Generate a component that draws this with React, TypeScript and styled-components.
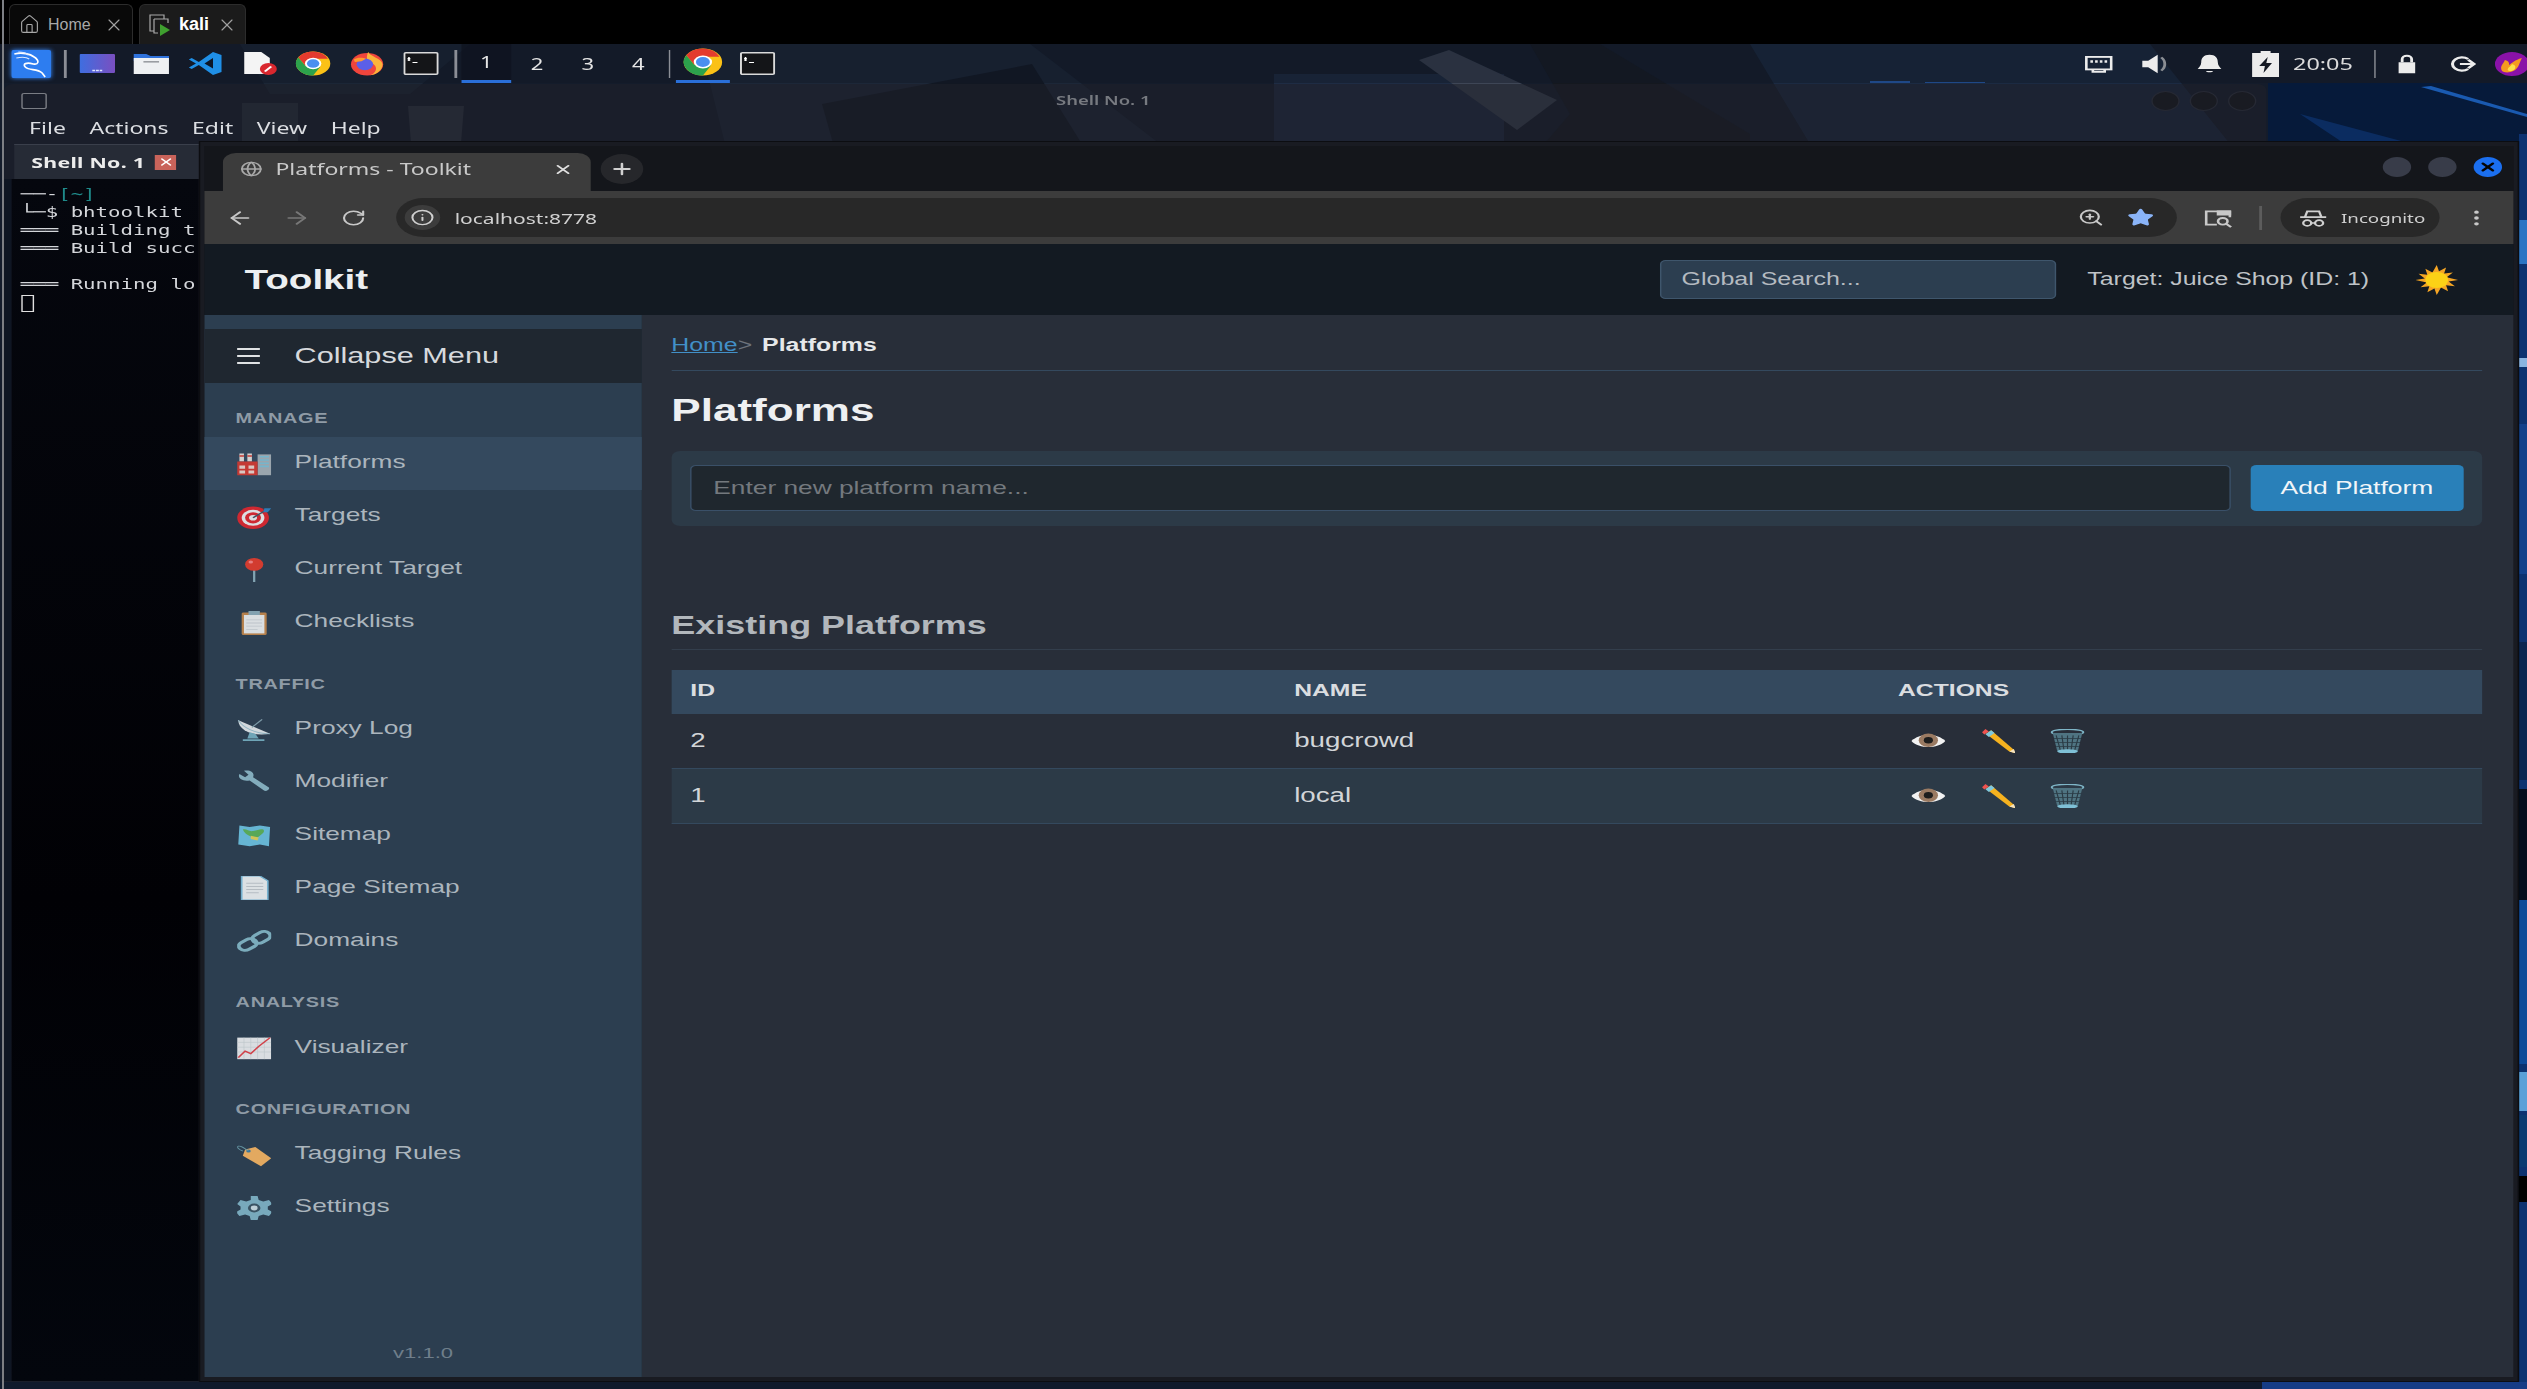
import React from 'react';
import styled, { createGlobalStyle } from 'styled-components';
import {
  ArrowLeft,
  ArrowRight,
  EllipsisVertical,
  Globe,
  Home as HomeIcon,
  Info,
  Plus,
  RotateCw,
  Star,
  X,
  ZoomIn,
} from 'lucide-react';

const GlobalStyle = createGlobalStyle`
  html, body {
    margin: 0;
    width: 2527px;
    height: 1389px;
    overflow: hidden;
    background: #000;
  }
  * { box-sizing: border-box; }
`;

/* ---------- viewer tabs, at the top of the capture ---------- */

const Page = styled.div`
  position: relative;
  width: 2527px;
  height: 1389px;
  overflow: hidden;
`;

const EdgeLine = styled.div`
  position: absolute;
  left: 2px;
  top: 0;
  bottom: 0;
  width: 2px;
  background: #7d7f84;
  z-index: 5;
`;

const ViewerBar = styled.div`
  display: flex;
  align-items: flex-end;
  gap: 6px;
  height: 44px;
  padding-left: 9px;
  background: #000;
  font-family: 'Liberation Sans', sans-serif;
`;

const ViewerTab = styled.div<{ $active?: boolean }>`
  display: flex;
  align-items: center;
  height: 40px;
  width: ${(p) => (p.$active ? 107 : 124)}px;
  padding-left: 9px;
  border: 1px solid #2c2c2c;
  border-bottom: none;
  border-radius: 6px 6px 0 0;
  background: ${(p) => (p.$active ? '#1b1b1b' : '#090909')};
  color: ${(p) => (p.$active ? '#fff' : '#a8a8a8')};
  font-size: ${(p) => (p.$active ? 18 : 16)}px;
  font-weight: ${(p) => (p.$active ? 700 : 400)};
`;

const ViewerLabel = styled.span`
  margin-left: 8px;
  flex: 1;
`;

const ViewerClose = styled(X)`
  margin-right: 8px;
  color: #a0a0a0;
`;

/* ---------- everything under the viewer tabs is 1.42x wider than tall ---------- */

const Stage = styled.div`
  position: relative;
  width: 1779.58px;
  height: 1345px;
  transform: scale(1.42, 1);
  transform-origin: 0 0;
  overflow: hidden;
`;

const WallpaperArt = styled.svg`
  position: absolute;
  inset: 0;
  width: 100%;
  height: 100%;
`;

const Panel = styled.div`
  position: relative;
  display: flex;
  align-items: center;
  height: 39px;
  padding-left: 8px;
  background: rgba(18, 24, 38, 0.45);
`;

const Divider = styled.span<{ $l: number; $r: number }>`
  width: 1.6px;
  height: 28px;
  margin: 0 ${(p) => p.$r}px 0 ${(p) => p.$l}px;
  background: #8b8e96;
`;

const Launcher = styled.div<{ $underline?: boolean; $width?: number }>`
  display: flex;
  align-items: center;
  justify-content: center;
  width: ${(p) => p.$width ?? 38}px;
  height: 39px;
  border-bottom: ${(p) => (p.$underline ? '3px solid #2a6fd8' : 'none')};
`;

const Workspace = styled.div<{ $active?: boolean }>`
  display: flex;
  align-items: center;
  justify-content: center;
  width: 35.7px;
  height: 39px;
  color: #e6e6e6;
  font-family: 'Noto Sans', sans-serif;
  font-size: 15.5px;
  background: ${(p) => (p.$active ? 'rgba(14,18,30,.7)' : 'transparent')};
  border-bottom: ${(p) => (p.$active ? '3px solid #2a6fd8' : 'none')};
`;

const Tray = styled.div`
  display: flex;
  align-items: center;
  margin-left: auto;
  margin-right: -1.4px;
`;

const Tile = styled.div`
  display: flex;
  align-items: center;
  justify-content: center;
  width: 39px;
  height: 39px;
`;

const Clock = styled.span`
  width: 57px;
  color: #dcdcdc;
  font-family: 'Noto Sans', sans-serif;
  font-size: 16.5px;
`;

const Avatar = styled.span`
  display: flex;
  margin-left: 3.4px;
`;

const Desktop = styled.div`
  position: relative;
  height: 1306px;
`;

/* ---------- terminal window behind the browser ---------- */

const TerminalWindow = styled.div`
  position: absolute;
  left: 3px;
  top: 1px;
  width: 1593px;
  height: 1298px;
  border-radius: 6px 6px 0 0;
  background: rgba(30, 32, 42, 0.6);
`;

const TermTitle = styled.div`
  display: flex;
  align-items: center;
  justify-content: center;
  position: relative;
  height: 32px;
  padding-right: 45px;
  color: #777a80;
  font-family: 'Noto Sans', sans-serif;
  font-size: 13px;
  font-weight: 600;
`;

const TermDots = styled.div`
  position: absolute;
  right: 7px;
  top: 7px;
  display: flex;
  gap: 7px;
`;

const TermDot = styled.span`
  width: 20px;
  height: 20px;
  border-radius: 50%;
  background: #191b22;
  border: 1px solid #262934;
`;

const TermIcon = styled.span`
  position: absolute;
  left: 12px;
  top: 9px;
  width: 18px;
  height: 16px;
  border: 1.5px solid #7a7d84;
  border-radius: 2px;
`;

const TermMenu = styled.div`
  display: flex;
  gap: 16.6px;
  padding-left: 17.5px;
  height: 24px;
  align-items: center;
  color: #dcdee2;
  font-family: 'Noto Sans', sans-serif;
  font-size: 16.2px;
`;

const ShellTab = styled.div`
  display: flex;
  align-items: center;
  margin: 4px 0 0 7px;
  width: 200px;
  height: 35px;
  padding-left: 12px;
  background: #262b36;
  border-top: 1px solid #3a3f4b;
  color: #ececec;
  font-family: 'Noto Sans', sans-serif;
  font-size: 15px;
  font-weight: 700;
  letter-spacing: 0.2px;
`;

const ShellClose = styled.span`
  display: flex;
  align-items: center;
  justify-content: center;
  width: 15px;
  height: 15px;
  margin-left: 7px;
  background: #c9635a;
  color: #fff;
`;

const TermBody = styled.pre`
  margin: 0;
  padding: 6px 0 0 6.6px;
  height: 1202px;
  border-left: 5.6px solid #0f1623;
  background: linear-gradient(#05070e, #010105 60%, #03060d);
  color: #d4d6da;
  font-family: 'DejaVu Sans Mono', monospace;
  font-size: 14.6px;
  line-height: 18px;
`;

const TermTeal = styled.span`
  color: #1f8a8a;
`;

const TermCursor = styled.span`
  display: block;
  width: 9px;
  height: 17px;
  margin-top: 2px;
  border: 1.5px solid #e0e0e0;
`;

/* ---------- browser window ---------- */

const BrowserWindow = styled.div`
  position: absolute;
  left: 140.1px;
  top: 58px;
  width: 1633.9px;
  height: 1241px;
  display: flex;
  flex-direction: column;
  border: 5px solid #191b22;
  border-left-width: 4.3px;
  border-right-width: 4.3px;
  outline: 1px solid #0c0d11;
  outline-offset: -1px;
  background: #14161b;
`;

const TabStrip = styled.div`
  display: flex;
  align-items: flex-end;
  height: 45px;
  flex: none;
  padding-left: 13.3px;
  background: #14161b;
`;

const BrowserTab = styled.div`
  display: flex;
  align-items: center;
  width: 259px;
  height: 38px;
  padding: 0 12px 6px 12px;
  border-radius: 9px 9px 0 0;
  background: #3c3c3c;
  color: #c9c9c9;
  font-family: 'Noto Sans', sans-serif;
  font-size: 16.2px;
`;

const TabTitle = styled.span`
  flex: 1;
  margin-left: 8.6px;
`;

const NewTab = styled.div`
  display: flex;
  align-items: center;
  justify-content: center;
  width: 30px;
  height: 30px;
  margin: 0 0 7px 7px;
  border-radius: 50%;
  background: #26272b;
  color: #d0d0d0;
`;

const WindowButtons = styled.div`
  display: flex;
  gap: 12.4px;
  margin: 0 7.6px 14px auto;
`;

const WindowButton = styled.span<{ $close?: boolean }>`
  display: flex;
  align-items: center;
  justify-content: center;
  width: 20px;
  height: 20px;
  border-radius: 50%;
  background: ${(p) => (p.$close ? '#1b6ff0' : '#383c49')};
  color: #050505;
`;

const Toolbar = styled.div`
  display: flex;
  align-items: center;
  height: 53px;
  flex: none;
  padding-left: 5.3px;
  background: #3c3c3c;
  color: #c8c8c8;
`;

const ToolButton = styled.span<{ $dim?: boolean }>`
  display: flex;
  align-items: center;
  justify-content: center;
  width: 40px;
  color: ${(p) => (p.$dim ? '#777' : '#c8c8c8')};
`;

const Omnibox = styled.div`
  display: flex;
  align-items: center;
  width: 1254.9px;
  height: 39px;
  margin-left: 9.2px;
  padding-left: 6px;
  border-radius: 20px;
  background: #282828;
  color: #d0d0d0;
  font-family: 'Noto Sans', sans-serif;
  font-size: 14.8px;
`;

const InfoChip = styled.span`
  display: flex;
  align-items: center;
  justify-content: center;
  width: 25px;
  height: 25px;
  margin-right: 10.6px;
  border-radius: 50%;
  background: #3c3c3c;
`;

const UrlText = styled.span`
  flex: 1;
`;

const OmniIcon = styled.span<{ $right: number }>`
  display: flex;
  margin-right: ${(p) => p.$right}px;
`;

const TabSearch = styled.span`
  display: flex;
  margin-left: 19px;
`;

const ToolSplit = styled.span`
  width: 1.6px;
  height: 24px;
  margin: 0 13px 0 19px;
  background: #5c5c5c;
`;

const IncognitoPill = styled.div`
  display: flex;
  align-items: center;
  gap: 9.5px;
  width: 112px;
  height: 39px;
  padding-left: 13px;
  border-radius: 20px;
  background: #282828;
  color: #cfcfcf;
  font-family: 'Noto Sans', sans-serif;
  font-size: 13.2px;
`;

const MoreButton = styled.span`
  display: flex;
  margin-left: 15.6px;
  color: #c8c8c8;
`;

/* ---------- the toolkit page ---------- */

const AppFrame = styled.div`
  flex: 1;
  display: flex;
  flex-direction: column;
  min-height: 0;
  font-family: 'Liberation Sans', sans-serif;
`;

const AppHeader = styled.header`
  display: flex;
  align-items: center;
  height: 71px;
  flex: none;
  padding: 0 39.3px 0 28.1px;
  background: #131a22;
`;

const Brand = styled.div`
  color: #eceff1;
  font-size: 27.2px;
  font-weight: 700;
`;

const GlobalSearch = styled.input`
  width: 279px;
  height: 39px;
  margin-left: auto;
  padding: 0 14.2px;
  border: 1px solid #3f566c;
  border-radius: 4px;
  background: #2c3e50;
  color: #c4c9ce;
  font-family: inherit;
  font-size: 17.6px;
  outline: none;

  &::placeholder {
    color: #b4bac0;
    opacity: 1;
  }
`;

const TargetLabel = styled.span`
  margin-left: 22px;
  color: #bfc3c7;
  font-size: 17.5px;
`;

const ThemeToggle = styled.span`
  display: flex;
  margin-left: 32.3px;
`;

const Body = styled.div`
  flex: 1;
  display: flex;
  min-height: 0;
`;

const Sidebar = styled.aside`
  position: relative;
  flex: none;
  width: 307.7px;
  padding-top: 14px;
  background: #2c3e50;
`;

const Collapse = styled.div`
  display: flex;
  align-items: center;
  height: 54px;
  padding-left: 23.3px;
  background: #1f2730;
  color: #d6d9dc;
  font-size: 21.6px;
`;

const Burger = styled.span`
  width: 16px;
  height: 16px;
  margin-right: 24px;
  border-top: 2px solid #dfe2e4;
  border-bottom: 2px solid #dfe2e4;
  position: relative;

  &::after {
    content: '';
    position: absolute;
    left: 0;
    right: 0;
    top: 5px;
    height: 2px;
    background: #dfe2e4;
  }
`;

const GroupLabel = styled.div`
  display: flex;
  align-items: flex-end;
  height: 53.8px;
  padding: 0 0 11px 21.8px;
  color: #8f9ba6;
  font-size: 14px;
  font-weight: 700;
  letter-spacing: 0.5px;
  text-transform: uppercase;
`;

const NavItem = styled.a<{ $active?: boolean }>`
  display: flex;
  align-items: center;
  height: 53px;
  padding: 0 0 2.4px 23.7px;
  background: ${(p) => (p.$active ? '#34495e' : 'transparent')};
  color: #abb5bd;
  font-size: 18.5px;
`;

const NavGlyph = styled.span`
  display: flex;
  width: 24px;
  margin: 3px 16.2px 0 -0.5px;
  opacity: 0.88;
`;

const Version = styled.div`
  position: absolute;
  left: 0;
  right: 0;
  bottom: 15px;
  color: #6f7e8b;
  font-size: 15.5px;
  text-align: center;
`;

const Main = styled.main`
  flex: 1;
  min-width: 0;
  padding: 0 21.5px 0 21px;
  background: #282e39;
`;

const Breadcrumb = styled.nav`
  display: flex;
  height: 56px;
  padding-top: 19.5px;
  border-bottom: 1.5px solid #34495e;
  color: #e6e8ea;
  font-size: 17.5px;
  line-height: 21px;
`;

const CrumbLink = styled.a`
  color: #4290c8;
  text-decoration: underline;
`;

const CrumbSep = styled.span`
  margin-right: 7px;
  color: #6d737c;
`;

const CrumbCurrent = styled.span`
  font-weight: 700;
`;

const PageTitle = styled.h1`
  margin: 21.5px 0 0;
  color: #eef0f2;
  font-size: 31px;
  font-weight: 700;
  line-height: 36px;
`;

const AddForm = styled.form`
  display: flex;
  align-items: center;
  gap: 13.4px;
  height: 75px;
  margin-top: 22px;
  padding: 0 13.7px 0 13.4px;
  border-radius: 6px;
  background: #2c3a47;
`;

const NameInput = styled.input`
  flex: 1;
  height: 46.5px;
  padding: 0 15.2px;
  border: 1px solid #3a5068;
  border-radius: 4px;
  background: #1f272e;
  color: #ddd;
  font-family: inherit;
  font-size: 18.5px;
  outline: none;

  &::placeholder {
    color: #74797e;
    opacity: 1;
  }
`;

const AddButton = styled.button`
  width: 150px;
  height: 46.5px;
  border: none;
  border-radius: 4px;
  background: #2980b9;
  color: #f1f5f8;
  font-family: inherit;
  font-size: 18.6px;
`;

const SectionTitle = styled.h2`
  margin: 83px 0 0;
  padding-bottom: 8px;
  border-bottom: 1px solid #333e4c;
  color: #b2b7bc;
  font-size: 25.3px;
  font-weight: 700;
  line-height: 32px;
`;

const Table = styled.div`
  margin-top: 20px;
`;

const HeadRow = styled.div`
  display: grid;
  grid-template-columns: repeat(3, 1fr);
  align-items: center;
  height: 44px;
  padding-bottom: 1.5px;
  background: #34495e;
`;

const HeadCell = styled.div`
  padding-left: 13.4px;
  color: #dadde0;
  font-size: 17.4px;
  font-weight: 700;
  text-transform: uppercase;
`;

const Row = styled.div<{ $striped?: boolean }>`
  display: grid;
  grid-template-columns: repeat(3, 1fr);
  align-items: center;
  height: 55px;
  border-bottom: 1px solid #34495e;
  background: ${(p) => (p.$striped ? '#2c3a47' : 'transparent')};
`;

const Cell = styled.div`
  padding-left: 13.4px;
  color: #d2d5d8;
  font-size: 19.5px;
`;

const ActionList = styled.div`
  display: flex;
  gap: 25px;
  margin-left: 9.2px;
`;

/* ---------- drawings ---------- */

const Emoji = ({ size = 24, children }: { size?: number; children: React.ReactNode }) => (
  <svg width={size} height={size} viewBox="1 1 30 30">
    {children}
  </svg>
);

const EMOJI: Record<string, React.ReactNode> = {
  factory: (
    <>
      <rect x="19" y="4" width="12" height="26" fill="#a9b2b8" />
      <path d="M21 7h8M21 11h8M21 15h8M21 19h8" stroke="#7fc4dc" strokeWidth="2" />
      <path d="M3 3h4v10H3zM10 3h4v10h-4z" fill="#e8e4e0" />
      <path d="M3 5h4v2H3zM10 5h4v2h-4z" fill="#d8382f" />
      <path d="M1 30V13h18v17z" fill="#d8382f" />
      <path d="M3 18h5v4H3zM11 18h5v4h-5zM3 24h5v4H3zM11 24h5v4h-5z" fill="#f2d9d0" />
    </>
  ),
  target: (
    <>
      <circle cx="15" cy="17" r="14" fill="#e5262d" />
      <circle cx="15" cy="17" r="10" fill="#f5f5f5" />
      <circle cx="15" cy="17" r="7" fill="#e5262d" />
      <circle cx="15" cy="17" r="3.5" fill="#f5f5f5" />
      <path d="M15 17L27 7" stroke="#456" strokeWidth="1.6" />
      <path d="M25 5h6l-3 5h-4z" fill="#2f84c4" />
    </>
  ),
  pin: (
    <>
      <path d="M16 15v16" stroke="#8fb3c0" strokeWidth="2" />
      <circle cx="16" cy="9" r="8" fill="#ea3c2c" />
      <circle cx="13" cy="6" r="2" fill="#f88" />
    </>
  ),
  clipboard: (
    <>
      <rect x="5" y="3" width="22" height="28" rx="1.5" fill="#c98a4c" />
      <rect x="7" y="6" width="18" height="23" fill="#f3f5f6" />
      <rect x="11" y="1" width="10" height="5" fill="#8fb0bf" />
      <path d="M9 12h14M9 16h14M9 20h14M9 24h10" stroke="#d0d6da" strokeWidth="1" />
    </>
  ),
  antenna: (
    <>
      <path d="M2 5c0 11 11 21 28 17z" fill="#e9eef0" />
      <path d="M2 5c4 9 14 17 28 17" stroke="#9fc4d2" strokeWidth="1" fill="none" />
      <path d="M12 20l-2 8h10l-3-6z" fill="#79b4c6" />
      <path d="M6 30h19" stroke="#79b4c6" strokeWidth="2.4" />
      <path d="M14 14l9-10" stroke="#89a8b4" strokeWidth="1.2" />
    </>
  ),
  wrench: (
    <path
      d="M3 6l5 4 3-3-4-5c5-2 10 2 8 8l14 13c1 2-2 5-4 4L12 14C6 16 1 11 3 6z"
      fill="#8fbccb"
    />
  ),
  map: (
    <>
      <path d="M3 4l9 2 9-2 9 2-1 24-8-2-9 2-10-2z" fill="#6fc6e6" />
      <path d="M6 9c4-1 5 3 9 2s6-3 9-2c2 3-1 5-3 8s-5 3-8 1-6-5-7-9z" fill="#5fb75a" />
      <path d="M13 17l7 2-1 4-6-2z" fill="#e8d85a" />
    </>
  ),
  page: (
    <>
      <path d="M5 1h16l7 6v24H5z" fill="#f4f7f8" stroke="#7fc0e0" strokeWidth="1.5" />
      <path d="M9 10h15M9 14h15M9 18h15M9 22h11" stroke="#c8ced2" strokeWidth="1.2" />
    </>
  ),
  link: (
    <g fill="none" stroke="#86bccb" strokeWidth="3.6">
      <rect x="1.5" y="15" width="17" height="11" rx="5.5" transform="rotate(-38 10 20)" />
      <rect x="13.5" y="6" width="17" height="11" rx="5.5" transform="rotate(-38 22 11)" />
    </g>
  ),
  chart: (
    <>
      <rect x="1" y="3" width="30" height="27" fill="#f2f4f5" />
      <path
        d="M1 9h30M1 15h30M1 21h30M7 3v27M13 3v27M19 3v27M25 3v27"
        stroke="#cfd6da"
        strokeWidth="0.6"
      />
      <path d="M2 28l6-8 5 3 7-9 10-11" stroke="#e8434a" strokeWidth="1.6" fill="none" />
    </>
  ),
  tag: (
    <>
      <path d="M8 9l9-3 14 14-9 10L6 17z" fill="#fdb863" />
      <circle cx="11" cy="11" r="2" fill="#3b7fa8" />
      <path d="M11 11C7 7 4 4 2 5s1 5 4 6" stroke="#6ca0ad" strokeWidth="1" fill="none" />
    </>
  ),
  gear: (
    <>
      <path
        d="M13 1h6l1 5 4 2 5-2 3 5-4 3v4l4 3-3 5-5-2-4 2-1 5h-6l-1-5-4-2-5 2-3-5 4-3v-4L1 11l3-5 5 2 4-2z"
        fill="#83b8cb"
      />
      <circle cx="16" cy="16" r="5.5" fill="#3d5666" />
      <circle cx="16" cy="16" r="3" fill="#d3e3ea" />
    </>
  ),
  eye: (
    <>
      <path d="M1 16C8 6 24 6 31 16 24 26 8 26 1 16z" fill="#f2f2f2" />
      <circle cx="16" cy="15" r="8.5" fill="#9a7a62" />
      <circle cx="16" cy="15" r="4" fill="#1d1d1d" />
    </>
  ),
  pencil: (
    <>
      <path d="M5.5 7L10 2.5 30 27l1 4-5-2z" fill="#f6b21f" />
      <path d="M5 7.5l5-5 3 3.5-5 5z" fill="#7fc8dd" />
      <path d="M2 5l3-4 3 3-4 4z" fill="#ef5350" />
      <path d="M26 29l4-3 1.5 5.5z" fill="#f6e3c0" />
    </>
  ),
  trash: (
    <>
      <ellipse cx="16" cy="5" rx="14" ry="3.6" fill="none" stroke="#7fb6c8" strokeWidth="1.8" />
      <path d="M3 6l4 23h18l4-23z" fill="#4f7482" />
      <path
        d="M6 9l4 20M11 9l2 20M16 9v20M21 9l-2 20M26 9l-4 20M4 13h24M5 18h22M6 23h20"
        stroke="#2a3a44"
        strokeWidth="1"
      />
      <ellipse cx="16" cy="29" rx="9" ry="2.8" fill="#7fc0d6" />
    </>
  ),
  sun: (
    <>
      <path
        d="M16 1l1.6 6.2 5-3.6-1.4 6 6.2-1-4.4 4.6L31 16l-6.6 1.6 4.4 4.6-6.2-1 1.4 6-5-3.6L16 31l-1.6-6.4-5 3.6 1.4-6-6.2 1 4.4-4.6L1 16l6.6-1.6-4.4-4.6 6.2 1-1.4-6 5 3.6z"
        fill="#f5a524"
      />
      <circle cx="16" cy="16" r="8" fill="#fcd116" />
    </>
  ),
};

const KaliLogo = () => (
  <svg
    width="28"
    height="28"
    viewBox="0 0 40 28"
    preserveAspectRatio="none"
    style={{ filter: 'drop-shadow(0 0 2px #3a8cff)' }}
  >
    <rect width="40" height="28" rx="2" fill="#2d7df0" />
    <path
      d="M3 4c8-2 16 0 20 3 6 4 4 8-1 7-7-2-11 0-8 3 4 4 12 1 17 6l3 4"
      stroke="#fff"
      strokeWidth="1.7"
      fill="none"
    />
    <path d="M5 8c5-1 10-1 13 1M7 2c4 0 8 1 10 3" stroke="#dce9ff" strokeWidth="1.1" fill="none" />
  </svg>
);

const ScreenIcon = () => (
  <svg width="25" height="25" viewBox="0 0 25 25">
    <defs>
      <linearGradient id="screenFill" x1="0" x2="1">
        <stop offset="0" stopColor="#3e6ee0" />
        <stop offset="1" stopColor="#7a4fc0" />
      </linearGradient>
    </defs>
    <rect y="3" width="25" height="19" rx="1" fill="url(#screenFill)" />
    <path d="M9 19.5h7" stroke="#dfe6ff" strokeWidth="1.5" strokeDasharray="2 .6" />
  </svg>
);

const FolderIcon = () => (
  <svg width="25" height="25" viewBox="0 0 25 25">
    <path d="M0 3h9l3 2h13v5H0z" fill="#2f72dc" />
    <path d="M0 7h25v16H0z" fill="#eef0f2" />
    <rect x="7" y="10" width="11" height="1.6" fill="#9a9da2" />
  </svg>
);

const VsCodeIcon = () => (
  <svg width="25" height="25" viewBox="0 0 25 25">
    <path d="M18 1l6 3v17l-6 3-10-10-5 4-2-1.5 5-4-5-4L3 7l5 4z" fill="#1f8fe6" />
    <path d="M18 7l-6 5.5 6 5z" fill="#0d1626" />
  </svg>
);

const FileBadgeIcon = () => (
  <svg width="25" height="25" viewBox="0 0 25 25">
    <path d="M2 1h12l6 6v16H2z" fill="#f4f4f4" />
    <circle cx="19" cy="18" r="6" fill="#d9272e" />
    <path d="M16.5 20.5l4.5-5" stroke="#fff" strokeWidth="1.8" />
  </svg>
);

const ChromeIcon = ({ size = 25 }: { size?: number }) => (
  <svg width={size} height={size} viewBox="0 0 32 32">
    <circle cx="16" cy="16" r="15.5" fill="#fbc116" />
    <path d="M16 .5A15.5 15.5 0 0 0 2.6 8.2L9 19l7-9h13.4A15.5 15.5 0 0 0 16 .5z" fill="#e33b2e" />
    <path d="M2.6 8.2A15.5 15.5 0 0 0 16 31.5l6.5-11.4L9 19z" fill="#2ca24c" />
    <circle cx="16" cy="16" r="7.4" fill="#fff" />
    <circle cx="16" cy="16" r="5.6" fill="#4a8ff0" />
  </svg>
);

const FirefoxIcon = () => (
  <svg width="25" height="25" viewBox="0 0 32 32">
    <circle cx="16" cy="17" r="14.5" fill="#f0453c" />
    <path d="M17 1c1 6 12 8 13 16 0 7-5 13-11 14 8-5 6-15-2-17-2-4-1-9 0-13z" fill="#fbb43a" />
    <circle cx="14" cy="17" r="7.5" fill="#5b5fe8" />
    <path d="M4 11c3-3 8-3 11-1l-4 3-6 1z" fill="#ff9a2e" />
  </svg>
);

const TerminalIcon = () => (
  <svg width="25" height="25" viewBox="0 0 25 25">
    <rect x=".8" y="1.8" width="23.4" height="21.4" rx="1" fill="#141518" stroke="#dadada" strokeWidth="1.4" />
    <path d="M4 6v4M3 7.5h2M3 9h2M6.5 11.5H10" stroke="#fff" strokeWidth="1.1" />
  </svg>
);

const NetworkIcon = () => (
  <svg width="20" height="20" viewBox="0 0 24 24" fill="none" stroke="#ececec" strokeWidth="2.2">
    <rect x="1.5" y="3.5" width="21" height="15" />
    <path d="M7 18.5v3h10v-3M6 7.5v3M10 7.5v3M14 7.5v3M18 7.5v3" />
  </svg>
);

const VolumeIcon = () => (
  <svg width="20" height="20" viewBox="0 0 24 24">
    <path d="M2 8h5l8-7v22l-8-7H2z" fill="#ececec" />
    <path d="M18 4c4 4 4 12 0 16" stroke="#8a8d93" strokeWidth="2.4" fill="none" />
  </svg>
);

const BellIcon = () => (
  <svg width="20" height="20" viewBox="0 0 24 24">
    <path d="M12 1c5 0 7 4 7 9 0 4 2 6 3 8H2c1-2 3-4 3-8 0-5 2-9 7-9z" fill="#ececec" />
    <path d="M9 20.5h6c0 2-6 2-6 0z" fill="#ececec" />
  </svg>
);

const BatteryIcon = () => (
  <svg width="19" height="26" viewBox="0 0 19 26">
    <path d="M6 0h7v2h6v24H0V2h6z" fill="#ececec" />
    <path d="M11 6l-6 9h4l-1 7 6-10h-4z" fill="#151a24" />
  </svg>
);

const LockIcon = () => (
  <svg width="20" height="20" viewBox="0 0 24 24">
    <path d="M5 10h14v13H5z" fill="#ececec" />
    <path d="M8 10V6a4 4 0 0 1 8 0v4" stroke="#ececec" strokeWidth="2.4" fill="none" />
  </svg>
);

const LogoutIcon = () => (
  <svg width="20" height="20" viewBox="0 0 24 24" fill="none" stroke="#ececec" strokeWidth="2.6">
    <path d="M17 6a8 8 0 1 0 0 12" />
    <path d="M10 12h12M17 7l5 5-5 5" />
  </svg>
);

const FlameAvatar = () => (
  <svg width="24" height="26" viewBox="0 0 24 26">
    <circle cx="12" cy="13" r="12" fill="#8a12a8" />
    <path d="M5 20c-2-5 1-7 2-11 3 1 3 3 3 5 2-2 4-5 9-7-2 5-2 12-8 14-3 1-5 0-6-1z" fill="#f59a20" />
    <path d="M9 19c0-3 2-3 3-6 2 1 3 2 2 5-1 2-4 3-5 1z" fill="#fbe04a" />
  </svg>
);

const IncognitoIcon = () => (
  <svg width="20" height="20" viewBox="0 0 24 24" fill="none" stroke="#cfcfcf" strokeWidth="2">
    <path d="M1 11h22M5 11l2-7h10l2 7" />
    <circle cx="7" cy="18" r="3.4" />
    <circle cx="17" cy="18" r="3.4" />
    <path d="M10.4 18h3.2" />
  </svg>
);

const TabSearchIcon = () => (
  <svg width="20" height="20" viewBox="0 0 24 24" fill="none" stroke="#c8c8c8" strokeWidth="2.2">
    <path d="M11 20H2V4h20v7" />
    <path d="M12 4h10v4H12z" fill="#c8c8c8" />
    <circle cx="16" cy="16" r="4" />
    <path d="M19 19l4 4" />
  </svg>
);

const Wallpaper = () => (
  <WallpaperArt viewBox="0 0 2527 1345" preserveAspectRatio="none">
    <rect width="2527" height="1345" fill="#141c2b" />
    <path d="M700 0h330l130 100-60 100H830l-100-80z" fill="#1c2738" />
    <path d="M822 60l210-40 50 80-50 60H850z" fill="#111722" />
    <path d="M242 59h56v50h-56z" fill="#2a3240" />
    <path d="M408 62h56l-4 50h-48z" fill="#303744" />
    <path d="M240 0h230l-60 50H270z" fill="#1b2636" />
    <path d="M1274 30h230v100h-230z" fill="#1e2c44" />
    <path d="M1419 16l30-10 108 50-40 30z" fill="#3e4656" />
    <path d="M1530 0h70l150 90v50h-240l60-70z" fill="#14181f" />
    <path d="M1750 0h400l80 100h-420z" fill="#1b2a42" />
    <path d="M1870 37h40v2h-40zM1925 38h60v1h-60z" fill="#2a6fd8" />
    <path d="M2268 39h259v70h-259z" fill="#061a3a" />
    <path d="M2421 43l106 30v-3l-96-28z" fill="#1a5ab0" />
    <path d="M2300 70l150 40h-90z" fill="#0b2c60" />
    <rect x="2519" y="90" width="8" height="1255" fill="#0c3270" />
    <rect x="2519" y="176" width="8" height="44" fill="#2a74c4" />
    <rect x="2519" y="314" width="8" height="9" fill="#8ab4e0" />
    <rect x="2519" y="380" width="8" height="150" fill="#12408a" />
    <rect x="2519" y="598" width="8" height="138" fill="#0a2550" />
    <rect x="2519" y="745" width="8" height="111" fill="#040c1c" />
    <rect x="2519" y="856" width="8" height="164" fill="#0e4a98" />
    <rect x="2519" y="1028" width="8" height="39" fill="#5aa0d8" />
    <rect x="2519" y="1071" width="8" height="52" fill="#0a3a70" />
    <rect x="2519" y="1132" width="8" height="26" fill="#000" />
    <rect x="0" y="1338" width="2527" height="7" fill="#101a2c" />
    <rect x="2262" y="1338" width="265" height="7" fill="#163c86" />
  </WallpaperArt>
);

const NAV_GROUPS = [
  {
    label: 'Manage',
    items: [
      { name: 'Platforms', icon: 'factory', active: true },
      { name: 'Targets', icon: 'target' },
      { name: 'Current Target', icon: 'pin' },
      { name: 'Checklists', icon: 'clipboard' },
    ],
  },
  {
    label: 'Traffic',
    items: [
      { name: 'Proxy Log', icon: 'antenna' },
      { name: 'Modifier', icon: 'wrench' },
      { name: 'Sitemap', icon: 'map' },
      { name: 'Page Sitemap', icon: 'page' },
      { name: 'Domains', icon: 'link' },
    ],
  },
  { label: 'Analysis', items: [{ name: 'Visualizer', icon: 'chart' }] },
  {
    label: 'Configuration',
    items: [
      { name: 'Tagging Rules', icon: 'tag' },
      { name: 'Settings', icon: 'gear' },
    ],
  },
];

const PLATFORMS = [
  { id: 2, name: 'bugcrowd' },
  { id: 1, name: 'local' },
];

const App = () => (
  <Page>
    <GlobalStyle />
    <EdgeLine />
    <ViewerBar>
      <ViewerTab>
        <HomeIcon size={21} strokeWidth={1.3} />
        <ViewerLabel>Home</ViewerLabel>
        <ViewerClose size={20} strokeWidth={1.4} />
      </ViewerTab>
      <ViewerTab $active>
        <svg width="22" height="22" viewBox="0 0 22 22" fill="none">
          <path d="M5 17H1V1h14v4" stroke="#aaa" strokeWidth="1.2" />
          <path d="M5 5h14v4M5 5v14h4" stroke="#aaa" strokeWidth="1.2" />
          <path d="M11 10l10 6-10 6z" fill="#3fa02f" />
        </svg>
        <ViewerLabel>kali</ViewerLabel>
        <ViewerClose size={20} strokeWidth={1.4} />
      </ViewerTab>
    </ViewerBar>
    <Stage>
      <Wallpaper />
      <Panel>
        <KaliLogo />
        <Divider $l={9} $r={3.1} />
        <Launcher><ScreenIcon /></Launcher>
        <Launcher><FolderIcon /></Launcher>
        <Launcher><VsCodeIcon /></Launcher>
        <Launcher><FileBadgeIcon /></Launcher>
        <Launcher><ChromeIcon /></Launcher>
        <Launcher><FirefoxIcon /></Launcher>
        <Launcher><TerminalIcon /></Launcher>
        <Divider $l={4.3} $r={3.1} />
        <Workspace $active>1</Workspace>
        <Workspace>2</Workspace>
        <Workspace>3</Workspace>
        <Workspace>4</Workspace>
        <Divider $l={3.4} $r={3.6} />
        <Launcher $underline><ChromeIcon size={28} /></Launcher>
        <Launcher><TerminalIcon /></Launcher>
        <Tray>
          <Tile><NetworkIcon /></Tile>
          <Tile><VolumeIcon /></Tile>
          <Tile><BellIcon /></Tile>
          <Tile><BatteryIcon /></Tile>
          <Clock>20:05</Clock>
          <Divider $l={0} $r={2.2} />
          <Tile><LockIcon /></Tile>
          <Tile><LogoutIcon /></Tile>
          <Avatar><FlameAvatar /></Avatar>
        </Tray>
      </Panel>
      <Desktop>
        <TerminalWindow>
          <TermTitle>
            <TermIcon />
            Shell No. 1
            <TermDots>
              <TermDot />
              <TermDot />
              <TermDot />
            </TermDots>
          </TermTitle>
          <TermMenu>
            <span>File</span>
            <span>Actions</span>
            <span>Edit</span>
            <span>View</span>
            <span>Help</span>
          </TermMenu>
          <ShellTab>
            Shell No. 1
            <ShellClose><X size={12} strokeWidth={2.4} /></ShellClose>
          </ShellTab>
          <TermBody>
            ──-<TermTeal>[~]</TermTeal>{'\n'}
            └─$ bhtoolkit{'\n'}
            ═══ Building t{'\n'}
            ═══ Build succ{'\n'}
            {'\n'}
            ═══ Running lo
            <TermCursor />
          </TermBody>
        </TerminalWindow>
        <BrowserWindow>
          <TabStrip>
            <BrowserTab>
              <Globe size={16} color="#a9a9a9" />
              <TabTitle>Platforms - Toolkit</TabTitle>
              <X size={15} strokeWidth={2.6} color="#e0e0e0" />
            </BrowserTab>
            <NewTab><Plus size={18} strokeWidth={2.4} /></NewTab>
            <WindowButtons>
              <WindowButton />
              <WindowButton />
              <WindowButton $close><X size={14} strokeWidth={3.4} /></WindowButton>
            </WindowButtons>
          </TabStrip>
          <Toolbar>
            <ToolButton><ArrowLeft size={20} /></ToolButton>
            <ToolButton $dim><ArrowRight size={20} /></ToolButton>
            <ToolButton><RotateCw size={18} /></ToolButton>
            <Omnibox>
              <InfoChip><Info size={17} /></InfoChip>
              <UrlText>localhost:8778</UrlText>
              <OmniIcon $right={16}><ZoomIn size={19} color="#c8c8c8" /></OmniIcon>
              <OmniIcon $right={16}><Star size={19} color="#8ab4f8" fill="#8ab4f8" /></OmniIcon>
            </Omnibox>
            <TabSearch><TabSearchIcon /></TabSearch>
            <ToolSplit />
            <IncognitoPill>
              <IncognitoIcon />
              Incognito
            </IncognitoPill>
            <MoreButton><EllipsisVertical size={20} /></MoreButton>
          </Toolbar>
          <AppFrame>
            <AppHeader>
              <Brand>Toolkit</Brand>
              <GlobalSearch placeholder="Global Search..." />
              <TargetLabel>Target: Juice Shop (ID: 1)</TargetLabel>
              <ThemeToggle><Emoji size={30}>{EMOJI.sun}</Emoji></ThemeToggle>
            </AppHeader>
            <Body>
              <Sidebar>
                <Collapse>
                  <Burger />
                  Collapse Menu
                </Collapse>
                {NAV_GROUPS.map((group) => (
                  <div key={group.label}>
                    <GroupLabel>{group.label}</GroupLabel>
                    {group.items.map((item) => (
                      <NavItem key={item.name} $active={'active' in item && item.active}>
                        <NavGlyph><Emoji>{EMOJI[item.icon]}</Emoji></NavGlyph>
                        {item.name}
                      </NavItem>
                    ))}
                  </div>
                ))}
                <Version>v1.1.0</Version>
              </Sidebar>
              <Main>
                <Breadcrumb>
                  <CrumbLink>Home</CrumbLink>
                  <CrumbSep>&gt;</CrumbSep>
                  <CrumbCurrent>Platforms</CrumbCurrent>
                </Breadcrumb>
                <PageTitle>Platforms</PageTitle>
                <AddForm>
                  <NameInput placeholder="Enter new platform name..." />
                  <AddButton type="button">Add Platform</AddButton>
                </AddForm>
                <SectionTitle>Existing Platforms</SectionTitle>
                <Table>
                  <HeadRow>
                    <HeadCell>ID</HeadCell>
                    <HeadCell>Name</HeadCell>
                    <HeadCell>Actions</HeadCell>
                  </HeadRow>
                  {PLATFORMS.map((platform, index) => (
                    <Row key={platform.id} $striped={index % 2 === 1}>
                      <Cell>{platform.id}</Cell>
                      <Cell>{platform.name}</Cell>
                      <Cell>
                        <ActionList>
                          <Emoji>{EMOJI.eye}</Emoji>
                          <Emoji>{EMOJI.pencil}</Emoji>
                          <Emoji>{EMOJI.trash}</Emoji>
                        </ActionList>
                      </Cell>
                    </Row>
                  ))}
                </Table>
              </Main>
            </Body>
          </AppFrame>
        </BrowserWindow>
      </Desktop>
    </Stage>
  </Page>
);

export default App;
